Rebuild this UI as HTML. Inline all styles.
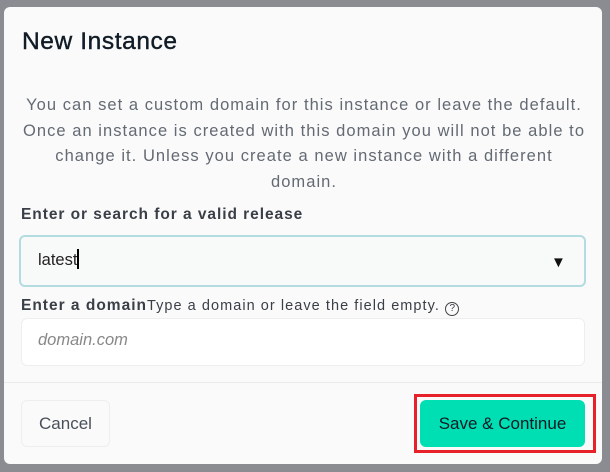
<!DOCTYPE html><html><head><style>
body{margin:0;width:610px;height:472px;background:#8b8c91;font-family:"Liberation Sans",sans-serif;position:relative;overflow:hidden}
.m{position:absolute;left:4px;top:7px;width:598px;height:457px;background:#fafafa;border-radius:6px}
.a{position:absolute}
</style></head><body>
<div class="m"></div>
<div class="a" style="left:22px;top:28px;font-size:24.5px;letter-spacing:0.6px;color:#111c26;-webkit-text-stroke:0.4px #111c26">New Instance</div>
<div class="a" style="left:5px;top:93px;width:598px;text-align:center;font-size:16.5px;letter-spacing:1.05px;line-height:25.5px;color:#646a73;white-space:nowrap">You can set a custom domain for this instance or leave the default.<br>Once an instance is created with this domain you will not be able to<br>change it. Unless you create a new instance with a different<br>domain.</div>
<div class="a" style="left:21px;top:206px;font-size:15.5px;font-weight:bold;letter-spacing:0.95px;color:#3a3f47">Enter or search for a valid release</div>
<div class="a" style="left:19px;top:235px;width:563px;height:48px;border:2px solid #b3dce0;border-radius:6px;background:#f8f9f9"></div>
<div class="a" style="left:38px;top:249px;font-size:16.5px;color:#222">latest<span style="display:inline-block;width:1.5px;height:20px;background:#000;vertical-align:-4px"></span></div>
<div class="a" style="left:551px;top:254px;font-size:15px;color:#111">▼</div>
<div class="a" style="left:21px;top:297px;font-size:15.5px;color:#3a3f47;letter-spacing:1px;white-space:nowrap"><b>Enter a domain</b><span style="font-size:14.5px;letter-spacing:1.05px">Type a domain or leave the field empty.</span> <span style="display:inline-block;width:12px;height:12px;border:1.5px solid #444;border-radius:50%;font-size:10px;text-align:center;line-height:12px;vertical-align:-1px;letter-spacing:0">?</span></div>
<div class="a" style="left:21px;top:318px;width:562px;height:46px;border:1px solid #eee;border-radius:6px;background:#fff"></div>
<div class="a" style="left:38px;top:331px;font-size:16.5px;font-style:italic;color:#888">domain.com</div>
<div class="a" style="left:4px;top:382px;width:598px;height:1px;background:#ebebeb"></div>
<div class="a" style="left:21px;top:400px;width:87px;height:45px;border:1px solid #eee;border-radius:6px;background:#fafafa;font-size:17px;color:#4a505a;text-align:center;line-height:45px">Cancel</div>
<div class="a" style="left:414px;top:394px;width:176px;height:53px;border:3px solid #e8202a"></div>
<div class="a" style="left:420px;top:400px;width:165px;height:47px;background:#00deb4;border-radius:6px;font-size:17px;color:#0e1a24;text-align:center;line-height:47px">Save &amp; Continue</div>
</body></html>
